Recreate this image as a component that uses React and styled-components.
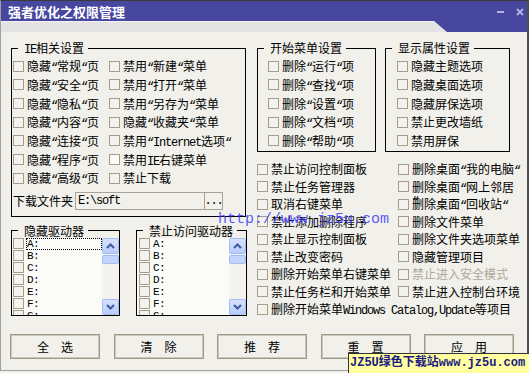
import styled, { createGlobalStyle } from "styled-components";

const BLUE = "#4747a0";
const BG = "#f1f0eb";

const GlobalStyle = createGlobalStyle`
  html, body { margin: 0; padding: 0; background: ${BG}; }
  body {
    font-family: "Noto Sans CJK SC", "Liberation Sans", sans-serif;
    font-size: 12px;
    color: #000;
  }
  * { box-sizing: border-box; }
`;

const Page = styled.div`
  position: relative;
  width: 529px;
  height: 373px;
  overflow: hidden;
`;

const Window = styled.div`
  display: flex;
  flex-direction: column;
  height: 371px;
  border-top: 1px solid #3a3a3a;
  border-left: 1px solid #a0a0a0;
  border-right: 2px solid #505050;
  border-bottom: 1px solid #a0a0a0;
  background: ${BG};
`;

const TitleBar = styled.div`
  height: 20px;
  flex: none;
  display: flex;
  align-items: center;
  padding: 2px 3px 0 7px;
  background: ${BLUE};
`;

const Title = styled.div`
  color: #fff;
  font-weight: bold;
  font-size: 13px;
  line-height: 14px;
`;

const Controls = styled.div`
  margin-left: auto;
  display: flex;
  align-items: center;
  gap: 12px;
`;

const TabStrip = styled.div`
  height: 11px;
  flex: none;
  background: ${BLUE};
`;

const Tab = styled.div`
  width: 446px;
  height: 100%;
  background: linear-gradient(#f4f4f4 0 1px, #e3e3e3 1px);
  clip-path: polygon(0 0, 433px 0, 446px 100%, 0 100%);
`;

const Body = styled.div`
  flex: 1;
  display: flex;
  flex-direction: column;
  padding: 9px 0 0 10px;
`;

const Main = styled.div`
  display: flex;
  align-items: flex-start;
  gap: 10px;
`;

const Column = styled.div`
  display: flex;
  flex-direction: column;
`;

const Group = styled.fieldset`
  margin: 0;
  padding: 0;
  min-width: 0;
  width: ${p => p.$w}px;
  border: 1px solid #000;
`;

const Legend = styled.legend`
  margin-left: 6px;
  padding: 0 4px 0 6px;
  height: 14px;
  font-size: 12px;
  line-height: 14px;
`;

const CheckGrid = styled.div`
  display: grid;
  grid-template-columns: ${p => p.$cols || "1fr"};
  grid-auto-rows: ${p => p.$row}px;
  padding: ${p => p.$pad || "0"};
`;

const Item = styled.div`
  display: flex;
  align-items: center;
  gap: 3px;
  white-space: nowrap;
  color: ${p => (p.$off ? "#aca899" : "#000")};
  grid-column: ${p => (p.$wide ? "1 / -1" : "auto")};
`;

const Box = styled.span`
  flex: none;
  width: 11px;
  height: 11px;
  border: 1px solid #a29d8d;
  background: ${p => (p.$lit ? "#fbfbf8" : "#f3f2ed")};
`;

const Label = styled.span`
  line-height: 12px;
  height: 12px;
`;

const Lat = styled.span`
  font-family: "Liberation Mono", monospace;
  font-size: 12px;
  line-height: 10px;
  letter-spacing: -1.2px;
`;

const Txt = ({ children }) =>
  String(children)
    .split(/([\x20-\x7e“”]+)/)
    .map((s, i) => (i % 2 ? <Lat key={i}>{s}</Lat> : s));

const FolderRow = styled.div`
  display: flex;
  align-items: center;
  margin-top: 4px;
  padding: 0 0 6px 1px;
`;

const FolderLabel = styled.span`
  width: 62px;
  line-height: 12px;
`;

const PathInput = styled.div`
  width: 130px;
  height: 18px;
  border: 1px solid #a7a398;
  padding-left: 2px;
  display: flex;
  align-items: center;
`;

const Browse = styled.div`
  width: 18px;
  height: 18px;
  border: 1px solid #a7a398;
  border-left: none;
  display: flex;
  align-items: center;
  justify-content: center;
`;

const DriveRow = styled.div`
  display: flex;
  gap: 16px;
  margin-top: 7px;
`;

const DriveList = styled.div`
  display: flex;
  height: 77px;
  background: #fbfbf7;
  overflow: hidden;
`;

const DriveItems = styled.div`
  flex: 1;
  padding-left: ${p => p.$pad}px;
`;

const DriveItem = styled.div`
  display: flex;
  align-items: center;
  height: 12px;
  gap: 2px;
`;

const DriveName = styled.span`
  flex: 1;
  height: 12px;
  font-family: "Liberation Mono", monospace;
  font-size: 11px;
  line-height: 10px;
  letter-spacing: -0.6px;
  border: 1px dotted ${p => (p.$focus ? "#000" : "transparent")};
`;

const Scroll = styled.div`
  flex: none;
  width: 17px;
  display: flex;
  flex-direction: column;
  background: #f4f3ef;
`;

const ScrollBtn = styled.div`
  height: 16px;
  border: 1px solid #a3bbf6;
  border-radius: 2px;
  background: linear-gradient(#d6e1fd, #b8ccfb);
  display: flex;
  align-items: center;
  justify-content: center;
`;

const Thumb = styled.div`
  height: 9px;
  margin-top: 1px;
  border: 1px solid #a3bbf6;
  border-radius: 2px;
  background: #c3d4fb;
`;

const Gap = styled.div`
  flex: 1;
`;

const TopGroups = styled.div`
  display: flex;
  gap: 9px;
`;

const ButtonRow = styled.div`
  display: flex;
  gap: 13.5px;
  margin: 16px 0 0 -1px;
`;

const Button = styled.button`
  width: 90px;
  height: 25px;
  padding: 0;
  border: 1px solid #9d988a;
  box-shadow: inset 0 0 0 1px #cbc7bb;
  background: ${BG};
  font: inherit;
  font-size: 12px;
  color: #000;
`;

const Watermark = styled.div`
  position: absolute;
  left: 218px;
  top: 211px;
  font-family: "Liberation Mono", monospace;
  font-size: 15px;
  line-height: 17px;
  color: rgba(60, 60, 255, 0.85);
  pointer-events: none;
`;

const Badge = styled.div`
  position: absolute;
  right: 0;
  bottom: 0;
  width: 181px;
  height: 20px;
  padding-left: 1px;
  border: 1px solid #333;
  border-right: none;
  border-bottom: none;
  background: #ffffa0;
  color: #1a1a82;
  font-family: "Liberation Mono", "Noto Sans CJK SC", monospace;
  font-weight: bold;
  font-size: 12px;
  line-height: 19px;
  white-space: nowrap;
`;

const Chevron = ({ down }) => (
  <svg width="9" height="6" viewBox="0 0 9 6">
    <polyline
      points={down ? "1,1 4.5,4.5 8,1" : "1,5 4.5,1.5 8,5"}
      fill="none"
      stroke="#3f5a9a"
      strokeWidth="2"
    />
  </svg>
);

const ieItems = [
  "隐藏“常规“页", "禁用“新建“菜单",
  "隐藏“安全“页", "禁用“打开“菜单",
  "隐藏“隐私“页", "禁用“另存为“菜单",
  "隐藏“内容“页", "隐藏“收藏夹“菜单",
  "隐藏“连接“页", "禁用“Internet选项“",
  "隐藏“程序“页", "禁用IE右键菜单",
  "隐藏“高级“页", "禁止下载",
];

const startItems = ["删除“运行“项", "删除“查找“项", "删除“设置“项", "删除“文档“项", "删除“帮助“项"];
const displayItems = ["隐藏主题选项", "隐藏桌面选项", "隐藏屏保选项", "禁止更改墙纸", "禁用屏保"];

const moreItems = [
  { t: "禁止访问控制面板" }, { t: "删除桌面“我的电脑“" },
  { t: "禁止任务管理器" }, { t: "删除桌面“网上邻居", tail: "“" },
  { t: "取消右键菜单" }, { t: "删除桌面“回收站“" },
  { t: "禁止添加删除程序" }, { t: "删除文件菜单" },
  { t: "禁止显示控制面板" }, { t: "删除文件夹选项菜单" },
  { t: "禁止改变密码" }, { t: "隐藏管理项目" },
  { t: "删除开始菜单右键菜单" }, { t: "禁止进入安全模式", off: true },
  { t: "禁止任务栏和开始菜单" }, { t: "禁止进入控制台环境" },
  { t: "删除开始菜单Windows Catalog,Update等项目", wide: true },
];

const drives = ["A:", "B:", "C:", "D:", "E:", "F:", "G:"];

const Check = ({ text, off, wide, lit, tail }) => (
  <Item $off={off} $wide={wide}>
    <Box $lit={lit} />
    <Label>
      <Txt>{text}</Txt>
      {tail && (
        <>
          <br />
          <Txt>{tail}</Txt>
        </>
      )}
    </Label>
  </Item>
);

const Drives = ({ title, w, pad, focus }) => (
  <Group $w={w}>
    <Legend>{title}</Legend>
    <DriveList>
      <DriveItems $pad={pad}>
        {drives.map((d, i) => (
          <DriveItem key={d}>
            <Box />
            <DriveName $focus={focus && i === 0}>{d}</DriveName>
          </DriveItem>
        ))}
      </DriveItems>
      <Scroll>
        <ScrollBtn><Chevron /></ScrollBtn>
        <Thumb />
        <Gap />
        <ScrollBtn><Chevron down /></ScrollBtn>
      </Scroll>
    </DriveList>
  </Group>
);

const App = () => {
  return (
    <Page>
      <GlobalStyle />
      <Window>
        <TitleBar>
          <Title>强者优化之权限管理</Title>
          <Controls>
            <svg width="7" height="2"><rect width="7" height="2" fill="#b0b4de" /></svg>
            <svg width="8" height="8"><path d="M1 1L7 7M7 1L1 7" stroke="#b0b4de" strokeWidth="1.8" /></svg>
          </Controls>
        </TitleBar>
        <TabStrip><Tab /></TabStrip>
        <Body>
          <Main>
            <Column>
              <Group $w={235}>
                <Legend><Txt>IE相关设置</Txt></Legend>
                <CheckGrid $cols="96px 1fr" $row={18.67} $pad="2px 0 0 1px">
                  {ieItems.map((t, i) => (
                    <Check key={t} text={t} lit={i === 11} />
                  ))}
                </CheckGrid>
                <FolderRow>
                  <FolderLabel>下载文件夹</FolderLabel>
                  <PathInput><Txt>E:\soft</Txt></PathInput>
                  <Browse><Txt>...</Txt></Browse>
                </FolderRow>
              </Group>
              <DriveRow>
                <Drives title="隐藏驱动器" w={109} pad={1} focus />
                <Drives title="禁止访问驱动器" w={111} pad={2} />
              </DriveRow>
            </Column>
            <Column>
              <TopGroups>
                <Group $w={119}>
                  <Legend>开始菜单设置</Legend>
                  <CheckGrid $row={18.67} $pad="2px 0 1px 10px">
                    {startItems.map(t => <Check key={t} text={t} />)}
                  </CheckGrid>
                </Group>
                <Group $w={125}>
                  <Legend>显示属性设置</Legend>
                  <CheckGrid $row={18.67} $pad="2px 0 1px 11px">
                    {displayItems.map(t => <Check key={t} text={t} />)}
                  </CheckGrid>
                </Group>
              </TopGroups>
              <CheckGrid $cols="141px 1fr" $row={17.5} $pad="8px 0 0 0">
                {moreItems.map(it => (
                  <Check key={it.t} text={it.t} off={it.off} wide={it.wide} tail={it.tail} />
                ))}
              </CheckGrid>
            </Column>
          </Main>
          <ButtonRow>
            <Button>全　选</Button>
            <Button>清　除</Button>
            <Button>推　荐</Button>
            <Button>重　置</Button>
            <Button>应　用</Button>
          </ButtonRow>
        </Body>
      </Window>
      <Watermark>http://www.jz5u.com</Watermark>
      <Badge>JZ5U绿色下载站www.jz5u.com</Badge>
    </Page>
  );
};

export default App;
